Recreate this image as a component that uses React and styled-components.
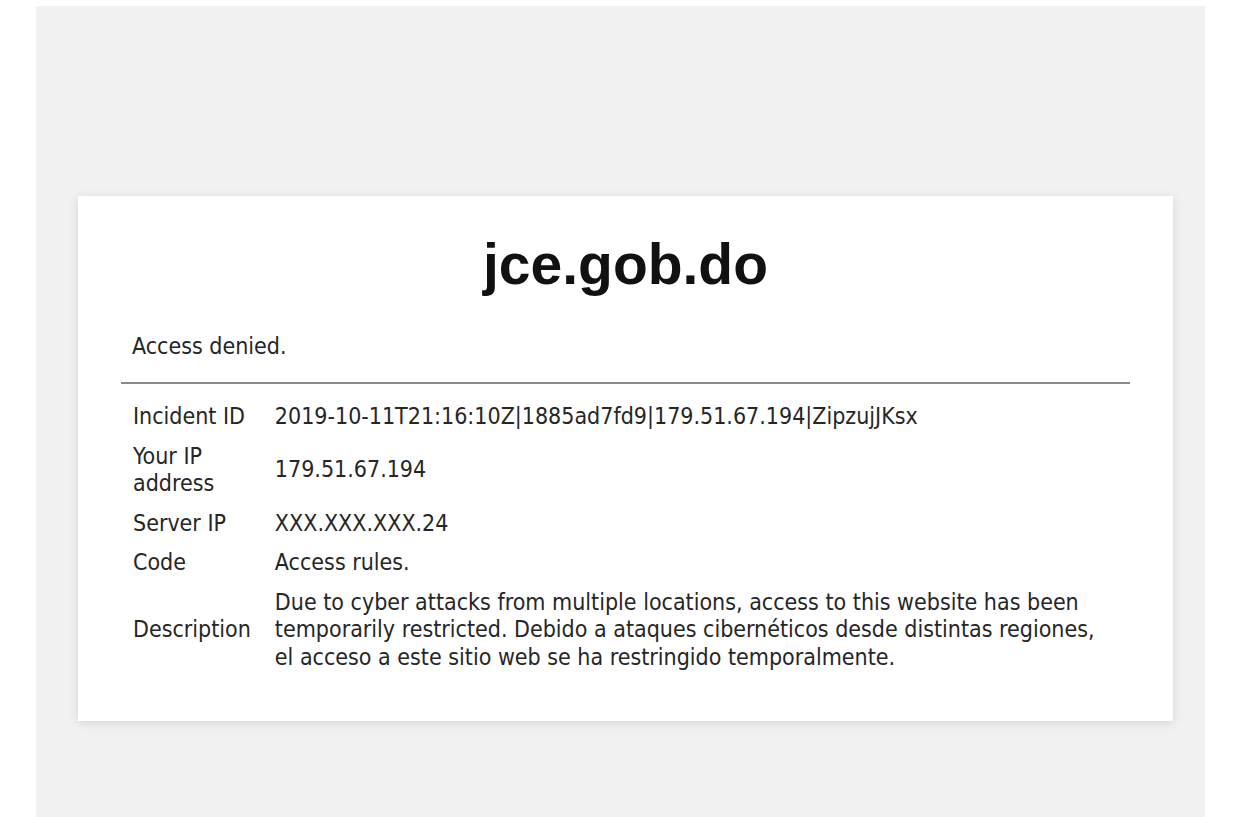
import * as React from 'react';
import styled, { createGlobalStyle } from 'styled-components';

const Global = createGlobalStyle`
  html, body {
    margin: 0;
    padding: 0;
    background: #fff;
  }
`;

const Page = styled.div`
  margin: 6px 37px 0 36px;
  min-height: calc(100vh - 6px);
  box-sizing: border-box;
  background: #f1f1f1;
  padding: 190px 32px 80px 42px;
`;

const Card = styled.section`
  background: #fff;
  box-shadow: 0 2px 10px rgba(0, 0, 0, 0.12);
  padding: 36px 43px 44px;
  font-family: "DejaVu Sans Condensed", "DejaVu Sans", sans-serif;
  font-size: 23px;
  color: #262626;
`;

const Title = styled.h1`
  margin: 0 0 37px;
  text-align: center;
  font-family: "Liberation Sans", Arial, sans-serif;
  font-weight: bold;
  font-size: 57px;
  line-height: 64px;
  color: #111;
`;

const Message = styled.p`
  margin: 0 0 0 11px;
  line-height: 27px;
`;

const Rule = styled.hr`
  margin: 22px 0 13px;
  border: none;
  height: 2px;
  background: #8a8a8a;
`;

const Table = styled.table`
  width: 100%;
  border-collapse: collapse;
`;

const Cell = styled.td`
  padding: 6px 12px;
  vertical-align: middle;
  line-height: 27.5px;
  width: ${(p) => (p.$key ? '1%' : 'auto')};
`;

const rows = [
  ['Incident ID', '2019-10-11T21:16:10Z|1885ad7fd9|179.51.67.194|ZipzujJKsx'],
  ['Your IP address', '179.51.67.194'],
  ['Server IP', 'XXX.XXX.XXX.24'],
  ['Code', 'Access rules.'],
  ['Description', 'Due to cyber attacks from multiple locations, access to this website has been temporarily restricted. Debido a ataques cibernéticos desde distintas regiones, el acceso a este sitio web se ha restringido temporalmente.'],
];

const App = () => {
  return (
    <>
      <Global />
      <Page>
        <Card>
          <Title>jce.gob.do</Title>
          <Message>Access denied.</Message>
          <Rule />
          <Table>
            <tbody>
              {rows.map(([k, v]) => (
                <tr key={k}>
                  <Cell $key>{k}</Cell>
                  <Cell>{v}</Cell>
                </tr>
              ))}
            </tbody>
          </Table>
        </Card>
      </Page>
    </>
  );
};

export default App;
